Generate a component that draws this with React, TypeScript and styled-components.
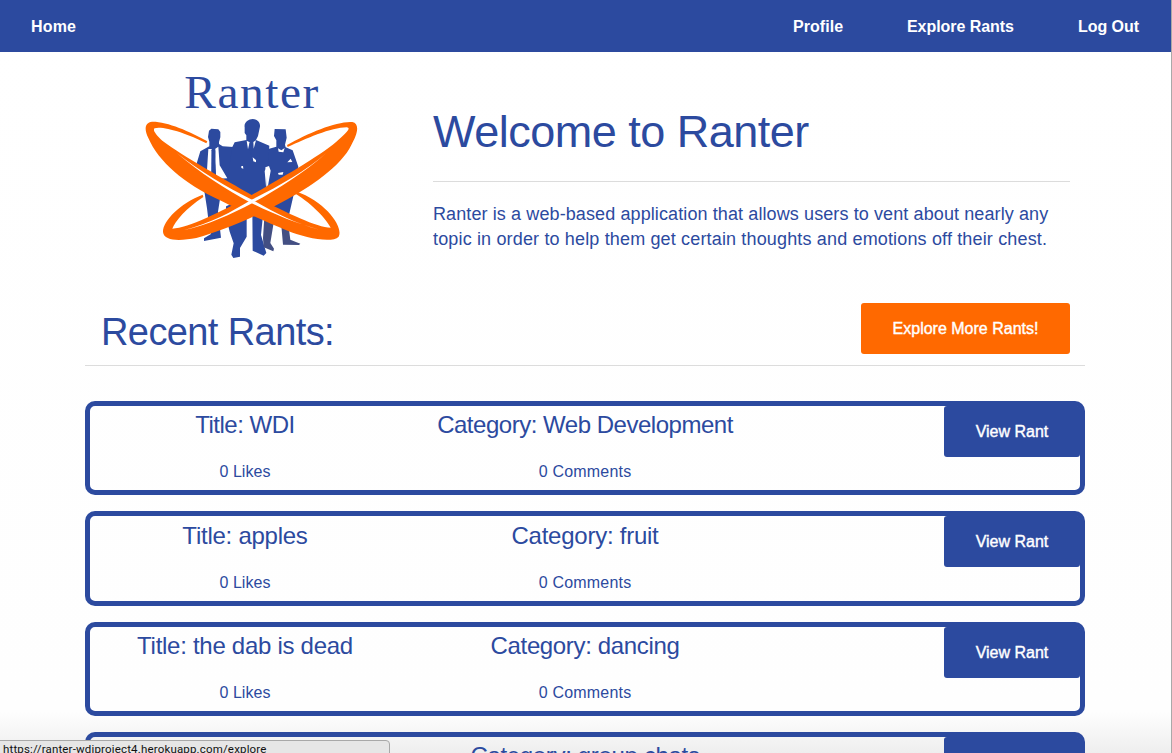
import React from 'react';
import styled, { createGlobalStyle } from 'styled-components';

const blue = '#2c4a9f';
const orange = '#ff6900';

const GlobalStyle = createGlobalStyle`
  * { box-sizing: border-box; }
  html, body { margin: 0; height: 753px; overflow: hidden; background: #fff; }
  body { font-family: 'Liberation Sans', Arial, sans-serif; color: ${blue}; }
`;

const Page = styled.div`
  position: relative;
  width: 1172px;
  height: 753px;
  overflow: hidden;
  border-right: 1px solid #a9a9a9;
  background: linear-gradient(#fff 0, #fefefe 712px, #eeeeee 753px);
`;

const TopBar = styled.nav`
  display: flex;
  justify-content: space-between;
  height: 52px;
  padding: 0 32px 0 31px;
  background: ${blue};
`;

const NavGroup = styled.div`
  display: flex;
  gap: 64px;
`;

const NavLink = styled.a<{ $w: number; $ls: number }>`
  width: ${p => p.$w}px;
  white-space: nowrap;
  color: #fff;
  font-size: 16px;
  font-weight: 700;
  letter-spacing: ${p => p.$ls}px;
  line-height: 53px;
`;

const Container = styled.main`
  width: 1000px;
  margin-left: 85px;
`;

const Hero = styled.section`
  display: flex;
  height: 233px;
`;

const LogoColumn = styled.div`
  width: 333px;
  padding: 13px 0 0 55px;
`;

const Intro = styled.div`
  flex: 1;
  padding: 48px 15px 0;
`;

const Headline = styled.h1`
  margin: 0;
  height: 82px;
  border-bottom: 1px solid #dcdcdc;
  font-size: 45px;
  font-weight: 400;
  line-height: 64px;
  letter-spacing: -0.5px;
  white-space: nowrap;
`;

const Lead = styled.p`
  margin: 20px 0 0;
  font-size: 18px;
  line-height: 25px;
  white-space: nowrap;
`;

const LeadLine = styled.span<{ $ls: number }>`
  display: block;
  letter-spacing: ${p => p.$ls}px;
`;

const RecentHeader = styled.header`
  display: flex;
  justify-content: space-between;
  height: 81px;
  padding: 18px 15px 0 16px;
  border-bottom: 1px solid #dcdcdc;
`;

const SectionTitle = styled.h2`
  margin: 0;
  font-size: 38px;
  font-weight: 400;
  line-height: 59px;
  letter-spacing: -0.6px;
  white-space: nowrap;
`;

const Button = styled.button<{ $tone: string; $w: number }>`
  width: ${p => p.$w}px;
  height: 51px;
  padding: 0;
  border: 0;
  border-radius: 3px;
  background: ${p => p.$tone};
  color: #fff;
  font: 16px/51px 'Liberation Sans', Arial, sans-serif;
  white-space: nowrap;
  vertical-align: top;
  -webkit-text-stroke: 0.4px #fff;
`;

const RantList = styled.div`
  display: flex;
  flex-direction: column;
  gap: 16px;
  padding-top: 35px;
`;

const Card = styled.article`
  display: flex;
  justify-content: space-between;
  height: 94.4px;
  flex: none;
  border: 5px solid ${blue};
  border-radius: 10px;
`;

const Cell = styled.div<{ $w: number; $align?: string }>`
  width: ${p => p.$w}px;
  text-align: ${p => p.$align ?? 'center'};
  white-space: nowrap;
`;

const CardTitle = styled.h4<{ $ls: number }>`
  margin: 0;
  padding-top: 0.16px;
  font-size: 24px;
  font-weight: 400;
  line-height: 38px;
  letter-spacing: ${p => p.$ls}px;
`;

const Count = styled.p<{ $ls: number }>`
  margin: 15.04px 0 0;
  font-size: 16px;
  line-height: 26px;
  letter-spacing: ${p => p.$ls}px;
`;

const StatusBubble = styled.div`
  position: absolute;
  left: -1px;
  bottom: -6px;
  width: 391px;
  height: 19px;
  padding-left: 3px;
  border: 1px solid #a8a8a8;
  border-radius: 0 4px 0 0;
  background: #e6e6e6;
  color: #111;
  font: 11.5px/17px Roboto, 'Liberation Sans', sans-serif;
  letter-spacing: 0.17px;
  white-space: nowrap;
`;

const Logo = () => (
  <svg width="225" height="200" viewBox="0 0 675 600" aria-label="Ranter">
    <text x="133" y="130" fontFamily="Liberation Serif, serif" fontSize="142" textLength="402" lengthAdjust="spacing" fill={blue}>Ranter</text>
    <g fill={blue}>
      <path d="M207 197L214 191L235 193L241 201V217L237 231V237L248 244L280 246L286 350H271L300 425L252 402L241 395L234 440L243 518L192 528V520L213 507L207 480L201 430L191 365L167 305L181 259L208 244V230L204 216Z" />
      <path d="M404 192L437 193L440 218L435 239L437 247L458 256L475 305L462 385L447 450H380V310L385 252L409 245V226L402 213Z" />
      <path d="M314 187C311 173 325 162 338 162C355 163 363 175 359 189L354 213L348 225L388 242L384 300L374 318L382 410L370 440L363 510L379 564L371 572L338 557L337 435L320 445L320 515L300 549V575L280 579L274 569L281 535L269 500L257 450L262 342L277 246L284 232L319 225V211L314 204Z" />
    </g>
    <g fill="#434f83">
      <path d="M373 455H404L391 534L402 551L400 559L371 547L369 520Z" />
      <path d="M423 470L444 470L451 524L481 536L477 540L429 539Z" />
    </g>
    <g fill="#fff">
      <path d="M205 252L215 252V327L201 315ZM226 251L235 245L239 301L262 340L229 341L225 290Z" />
      <path d="M320 227L329 232L324 253ZM340 231L348 226L341 251ZM338 277L348 285L348 292L340 289ZM304 303L309 303L310 311L304 309Z" />
      <path d="M376 307L387 303L392 317L384 362L380 362ZM414 250L424 256L434 249L430 262L416 260ZM442 292L452 281L457 291ZM414 324L430 321L428 329L416 329Z" />
      <path d="M240 398L253 402L275 416L245 430Z" />
    </g>
    <path d="M215 256L220 250L226 257L227 326L220 333L214 322Z" fill={blue} />
    <path d="M329 234H339L336 250L334 275L328 247Z" fill={blue} />
    <g fill={orange}>
      <path d="M202 229C150 199 80 169 36 170C14 172 12 194 25 219C55 289 130 355 240 406C302 437 381 472 439 496C495 519 576 536 596 515C611 488 561 412 467 379L464 385C522 420 562 468 572 488C530 487 440 443 335 390C255 343 130 274 67 227C47 208 37 194 44 190C68 182 143 206 199 235Z" />
      <path d="M441 240C505 203 595 167 637 171C660 176 653 207 634 240C604 303 509 368 427 411C350 454 237 502 169 519C120 528 72 529 69 501C68 468 121 414 188 389L190 396C138 430 105 469 97 491C146 488 240 442 335 390C410 346 534 277 589 230C622 200 634 189 620 187C574 187 496 222 443 246Z" />
    </g>
    <path d="M110 264C180 319 260 367 336 404C409 445 463 475 539 494C468 475 400 447 332 413C256 372 181 324 110 264Z" fill="#fff" />
    <path d="M559 264C489 326 411 374 339 413C270 449 208 478 130 496C211 475 276 440 334 404C415 365 496 319 559 264Z" fill="#fff" />
  </svg>
);

type Rant = {
  title?: string;
  titleLs: number;
  category: string;
  categoryLs: number;
  likes?: string;
  comments?: string;
  action?: string;
};

const rants: Rant[] = [
  { title: 'Title: WDI', titleLs: -0.48, category: 'Category: Web Development', categoryLs: -0.48, likes: '0 Likes', comments: '0 Comments', action: 'View Rant' },
  { title: 'Title: apples', titleLs: -0.25, category: 'Category: fruit', categoryLs: -0.25, likes: '0 Likes', comments: '0 Comments', action: 'View Rant' },
  { title: 'Title: the dab is dead', titleLs: -0.28, category: 'Category: dancing', categoryLs: -0.35, likes: '0 Likes', comments: '0 Comments', action: 'View Rant' },
  { titleLs: 0, category: 'Category: group chats', categoryLs: -0.33 },
];

export default function App() {
  return (
    <>
      <GlobalStyle />
      <Page>
        <TopBar>
          <NavLink $w={46} $ls={0.15}>Home</NavLink>
          <NavGroup>
            <NavLink $w={50} $ls={0.05}>Profile</NavLink>
            <NavLink $w={107} $ls={-0.05}>Explore Rants</NavLink>
            <NavLink $w={61} $ls={-0.05}>Log Out</NavLink>
          </NavGroup>
        </TopBar>
        <Container>
          <Hero>
            <LogoColumn><Logo /></LogoColumn>
            <Intro>
              <Headline>Welcome to Ranter</Headline>
              <Lead>
                <LeadLine $ls={0.105}>Ranter is a web-based application that allows users to vent about nearly any</LeadLine>
                <LeadLine $ls={0.155}>topic in order to help them get certain thoughts and emotions off their chest.</LeadLine>
              </Lead>
            </Intro>
          </Hero>
          <RecentHeader>
            <SectionTitle>Recent Rants:</SectionTitle>
            <Button $tone={orange} $w={209}>Explore More Rants!</Button>
          </RecentHeader>
          <RantList>
            {rants.map(rant => (
              <Card key={rant.category}>
                <Cell $w={310}>
                  {rant.title && <CardTitle $ls={rant.titleLs}>{rant.title}</CardTitle>}
                  {rant.likes && <Count $ls={0.05}>{rant.likes}</Count>}
                </Cell>
                <Cell $w={340}>
                  <CardTitle $ls={rant.categoryLs}>{rant.category}</CardTitle>
                  {rant.comments && <Count $ls={0.2}>{rant.comments}</Count>}
                </Cell>
                <Cell $w={310} $align="right">
                  <Button $tone={blue} $w={136}>{rant.action}</Button>
                </Cell>
              </Card>
            ))}
          </RantList>
        </Container>
        <StatusBubble>https://ranter-wdiproject4.herokuapp.com/explore</StatusBubble>
      </Page>
    </>
  );
}
